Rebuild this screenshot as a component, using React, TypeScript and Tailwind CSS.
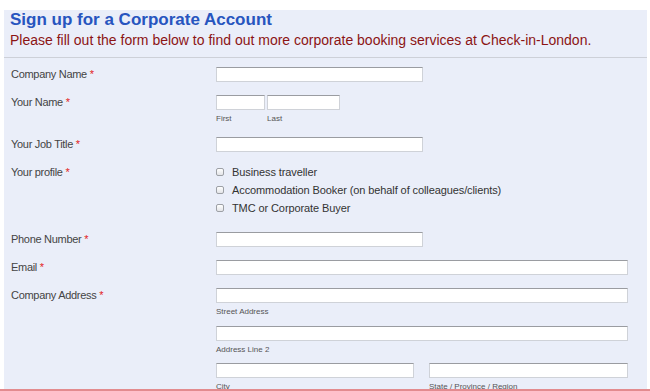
import React from 'react';

const font = { fontFamily: '"Liberation Sans", Arial, sans-serif' };

function Req() {
  return <span className="text-[#e31b1b]"> *</span>;
}

function Field({ className = '' }: { className?: string }) {
  return (
    <div
      className={`h-[15px] bg-white border border-[#cfd2d8] border-t-[#9a9ca1] ${className}`}
    />
  );
}

function Sub({ children, className = '' }: { children: React.ReactNode; className?: string }) {
  return <div className={`text-[8px] leading-[10px] text-[#555] mt-[4px] ${className}`}>{children}</div>;
}

function Row({ label, children, className = '' }: { label: string; children: React.ReactNode; className?: string }) {
  return (
    <div className={`flex ${className}`}>
      <div className="w-[205px] shrink-0 text-[11px] leading-[15px] tracking-[-0.3px] text-[#444]">
        {label}
        <Req />
      </div>
      <div className="flex-1">{children}</div>
    </div>
  );
}

const profiles = [
  'Business traveller',
  'Accommodation Booker (on behalf of colleagues/clients)',
  'TMC or Corporate Buyer',
];

export default function App() {
  return (
    <div className="relative h-[391px] overflow-hidden bg-white" style={font}>
      <div className="mx-[4px] mt-[10px] w-[643px] bg-[#eaeef9] pb-[40px]">
        {/* Header */}
        <div className="px-[6px] pb-[9px] border-b border-[#cdd0d8]">
          <h1 className="text-[17px] leading-[20px] font-bold text-[#2755bf]">
            Sign up for a Corporate Account
          </h1>
          <p className="mt-[2px] text-[14px] leading-[16px] text-[#8c1414]">
            Please fill out the form below to find out more corporate booking services at Check-in-London.
          </p>
        </div>

        {/* Form */}
        <div className="pl-[7px] pr-[19px] pt-[9px]">
          <Row label="Company Name">
            <Field className="w-[207px]" />
          </Row>

          <Row label="Your Name" className="mt-[13px]">
            <div className="flex gap-[2px]">
              <div className="w-[49px]">
                <Field />
                <Sub>First</Sub>
              </div>
              <div className="w-[73px]">
                <Field />
                <Sub>Last</Sub>
              </div>
            </div>
          </Row>

          <Row label="Your Job Title" className="mt-[13px]">
            <Field className="w-[207px]" />
          </Row>

          <div className="mt-[11px] flex">
            <div className="w-[205px] shrink-0 text-[11px] leading-[18px] tracking-[-0.3px] text-[#444]">
              Your profile
              <Req />
            </div>
            <div className="flex-1">
              {profiles.map((p) => (
                <label key={p} className="flex items-center h-[18px] text-[11px] tracking-[-0.1px] text-[#333]">
                  <span className="w-[8px] h-[8px] rounded-[2px] border border-[#9da0a6] bg-gradient-to-b from-white to-[#e3e4e8]" />
                  <span className="ml-[8px]">{p}</span>
                </label>
              ))}
            </div>
          </div>

          <Row label="Phone Number" className="mt-[15px]">
            <Field className="w-[207px]" />
          </Row>

          <Row label="Email" className="mt-[13px]">
            <Field />
          </Row>

          <Row label="Company Address" className="mt-[13px]">
            <Field />
            <Sub>Street Address</Sub>
            <Field className="mt-[9px]" />
            <Sub>Address Line 2</Sub>
            <div className="mt-[8px] flex gap-[15px]">
              <div className="w-[198px]">
                <Field />
                <Sub>City</Sub>
              </div>
              <div className="flex-1">
                <Field />
                <Sub>State / Province / Region</Sub>
              </div>
            </div>
          </Row>
        </div>
      </div>

      <div className="absolute left-0 right-0 bottom-0 h-[2px] bg-[#e38b8f]" />
    </div>
  );
}
